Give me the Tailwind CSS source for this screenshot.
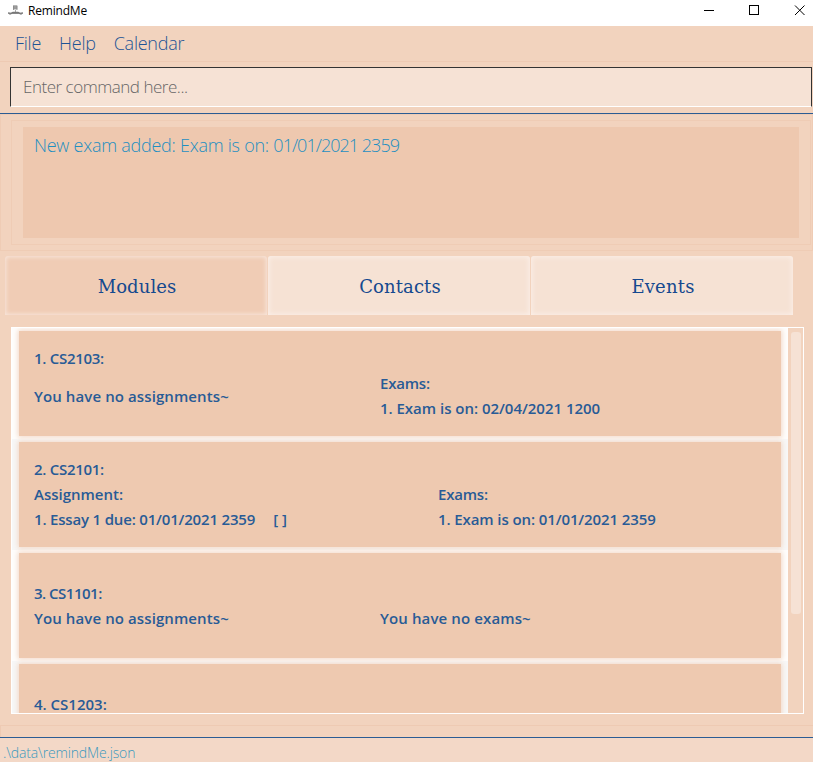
<!DOCTYPE html>
<html lang="en">
<head>
<meta charset="utf-8">
<title>RemindMe</title>
<script src="https://cdn.jsdelivr.net/npm/@tailwindcss/browser@4"></script>
</head>
<body class="w-[813px] h-[762px] overflow-hidden bg-[#f2d3be] font-['Open_Sans',sans-serif] flex flex-col whitespace-nowrap">
<header class="h-[26px] shrink-0 bg-white flex items-center pl-2">
  <svg class="w-[15px] h-[15px] shrink-0 -mt-[5px]" viewBox="0 0 15 15" fill="none"><path d="M5 2.500h4v4h-4z" fill="#aaa"/><path d="M5 3h4.500M5 5h4.500M5.500 3v4M9 3v4" stroke="#888" stroke-width=".8"/><path d="M7.500 7v2" stroke="#aaa"/><path d="M0 10l3 .5 2-1h5l2 1 3-.5" stroke="#777" stroke-width="1.500"/><path d="M1 11h2M4 10.500h7M12 11h2" stroke="#888" stroke-width="1"/></svg>
  <span class="ml-[5px] -mt-[4px] text-[12px] leading-4 text-black tracking-[-0.2px]">RemindMe</span>
  <svg class="ml-auto mr-2 w-[101px] h-5 -mt-[6px]" viewBox="0 0 101 20" fill="none" stroke="#000" shape-rendering="crispEdges"><path d="M0 10.500h10M45.500 5.500h9v9h-9z"/><path d="M91 5.500l9.500 9.500M100.500 5.500l-9.500 9.500" shape-rendering="auto"/></svg>
</header>
<nav class="h-[36px] shrink-0 border-b border-[#eecab3] flex items-center gap-[18px] pl-[15px] text-[18px] tracking-[-0.25px] font-light text-[#1d5395]">
  <span>File</span><span>Help</span><span>Calendar</span>
</nav>
<div class="h-[51px] shrink-0 pt-[5px] pl-[10px] pr-px">
  <div class="h-[40px] border border-[#333] border-b-white bg-[#f6e2d5] flex items-center pl-3 text-[17px] tracking-[-0.48px] font-light text-[#666]">Enter command here...</div>
</div>
<div class="h-px shrink-0 bg-[#2b5c94]"></div>
<section class="h-[137px] shrink-0 border border-[#efccb5] pt-[5px] pl-[10px] pr-px">
  <div class="h-[125px] border border-[#efccb5] pt-[6px] pl-[11px] pr-[11px]">
    <div class="h-[111px] bg-[#eec8af] pl-[11px] pt-[5px] text-[18px] leading-[26px] tracking-[-0.25px] font-light text-[#1f8fc1]">New exam added: Exam is on: <span class="tracking-[-0.97px]">01/01/2021 2359</span></div>
  </div>
</section>
<div class="mt-[5px] ml-[5px] h-[59px] shrink-0 flex gap-px font-['DejaVu_Serif',serif] text-[18px] text-[#15498f]">
  <div class="w-[262px] pt-[2px] pl-[2px] rounded-t-[3px] bg-[#f0ccb5] shadow-[inset_0_0_4px_1px_#f8e6dc] flex items-center justify-center tracking-[0.1px]">Modules</div>
  <div class="w-[262px] pt-[2px] pl-[2px] rounded-t-[3px] bg-[#f6e2d4] shadow-[inset_0_0_5px_1px_#fbefe9] flex items-center justify-center tracking-[0.1px]">Contacts</div>
  <div class="w-[262px] pt-[2px] pl-[2px] rounded-t-[3px] bg-[#f6e2d4] shadow-[inset_0_0_5px_1px_#fbefe9] flex items-center justify-center tracking-[0.2px]">Events</div>
</div>
<div class="mt-[12px] ml-[11px] w-[793px] h-[387px] shrink-0 border border-white flex text-[15px] leading-[25px] font-semibold text-[#285b96]">
  <main class="w-[776px] h-[385px] overflow-hidden bg-[#fefdfc] flex flex-col">
    <article class="h-[111px] shrink-0 pt-[3px] pl-[7px]"><div class="w-[762px] h-[105px] bg-[#eec9b0] shadow-[0_0_5px_1px_#f3d8c6] flex pl-[15px] pt-[15px]">
      <div class="w-[346px]"><p class="tracking-[-0.28px]">1. CS2103:</p><p class="mt-[13px] tracking-[0.1px]">You have no assignments~</p></div>
      <div class="pt-[25px]"><p class="tracking-[-0.2px]">Exams:</p><p class="tracking-[-0.02px]">1. Exam is on: 02/04/2021 1200</p></div>
    </div></article>
    <article class="h-[111px] shrink-0 pt-[3px] pl-[7px] bg-[#f7f7f7]"><div class="w-[762px] h-[105px] bg-[#eec9b0] shadow-[0_0_5px_1px_#f3d8c6] flex pl-[15px] pt-[15px]">
      <div class="w-[404px]"><p class="tracking-[-0.28px]">2. CS2101:</p><p>Assignment:</p><p><span class="tracking-[-0.18px]">1. Essay 1 due: 01/01/2021 2359</span><span class="ml-[18px]">[ ]</span></p></div>
      <div class="pt-[25px]"><p class="tracking-[-0.2px]">Exams:</p><p class="tracking-[-0.1px]">1. Exam is on: 01/01/2021 2359</p></div>
    </div></article>
    <article class="h-[111px] shrink-0 pt-[3px] pl-[7px]"><div class="w-[762px] h-[105px] bg-[#eec9b0] shadow-[0_0_5px_1px_#f3d8c6] flex pl-[15px] pt-[28px]">
      <div class="w-[346px]"><p class="tracking-[-0.5px]">3. CS1101:</p><p class="tracking-[0.1px]">You have no assignments~</p></div>
      <div class="pt-[25px]"><p class="tracking-[0.12px]">You have no exams~</p></div>
    </div></article>
    <article class="h-[111px] shrink-0 pt-[3px] pl-[7px] bg-[#f7f7f7]"><div class="w-[762px] h-[105px] bg-[#eec9b0] shadow-[0_0_5px_1px_#f3d8c6] pl-[15px] pt-[28px]">
      <p>4. CS1203:</p>
    </div></article>
  </main>
  <div class="grow bg-[#f2d3be] pt-[4px] pl-[3px]"><div class="w-[10px] h-[282px] rounded-[3px] bg-[#f6e2d5]"></div></div>
</div>
<div class="mt-[11px] h-[12px] shrink-0 border-t border-l border-[#eecab3]"></div>
<div class="h-px shrink-0 bg-[#2b5c94]"></div>
<footer class="grow bg-[#f3d8c7] pl-[3px] pt-[4px] text-[14px] leading-[22px] tracking-[-0.15px] font-light text-[#3b98be]">.\data\remindMe.json</footer>
</body>
</html>
